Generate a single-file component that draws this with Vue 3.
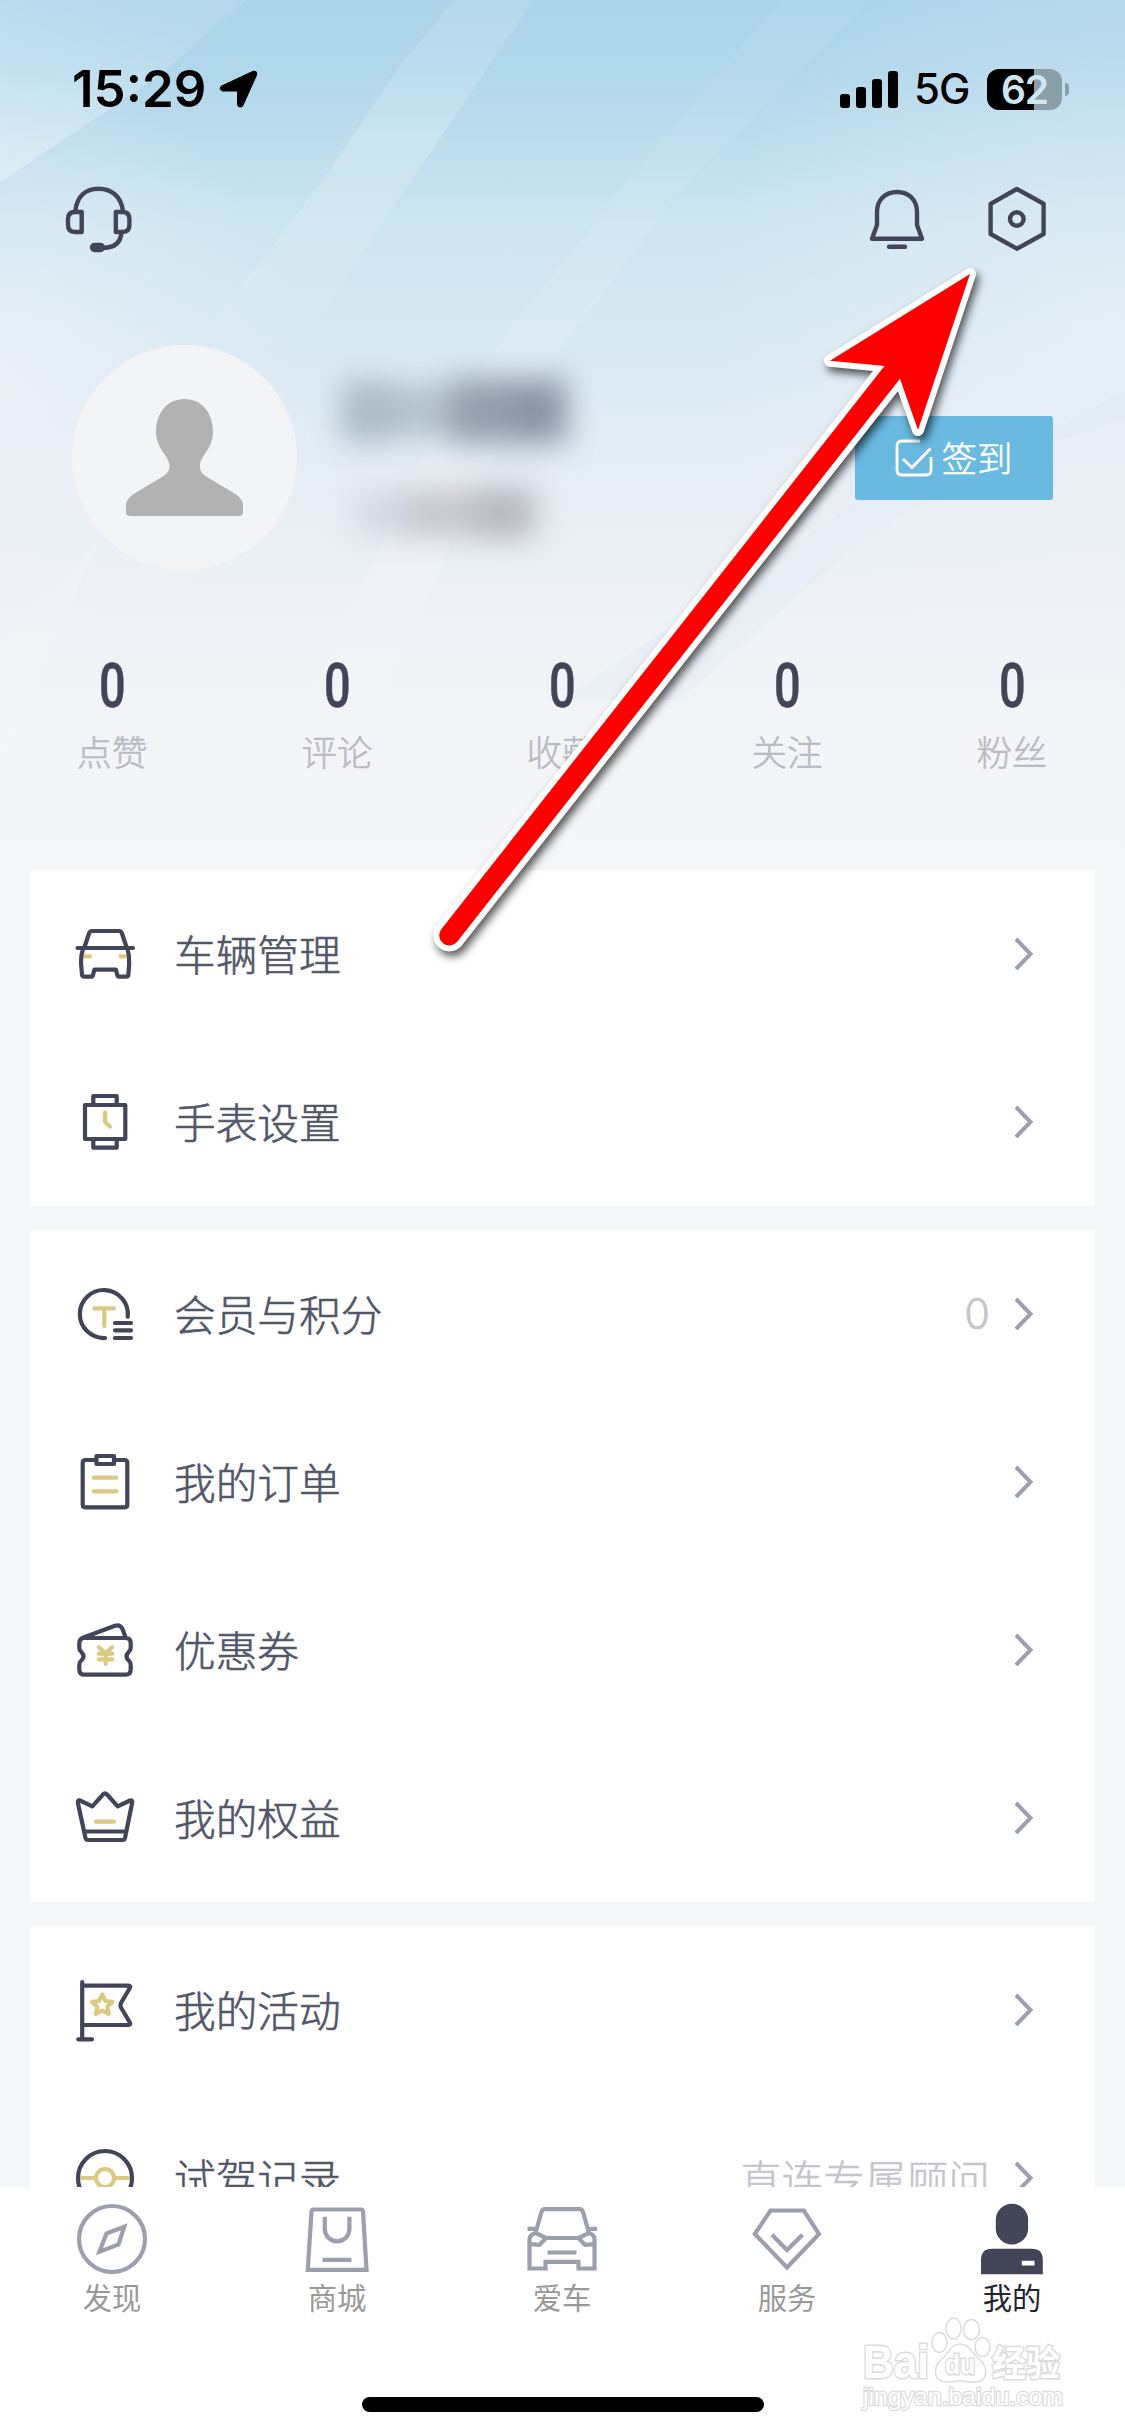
<script setup>
const stats = ['点赞', '评论', '收藏', '关注', '粉丝']

const groups = [
  [
    { icon: 'car', label: '车辆管理' },
    { icon: 'watch', label: '手表设置' },
  ],
  [
    { icon: 'member', label: '会员与积分', extra: '0' },
    { icon: 'order', label: '我的订单' },
    { icon: 'coupon', label: '优惠券' },
    { icon: 'crown', label: '我的权益' },
  ],
  [
    { icon: 'flag', label: '我的活动' },
    { icon: 'drive', label: '试驾记录', extra: '直连专属顾问' },
  ],
]

// d: dark strokes, g: gold strokes
const icons = {
  car: {
    d: 'M5.5 27H61M12.5 26L17 12.500Q17.800 10 20 10H47Q49.200 10 50 12.500L54.500 26M11 28Q8.800 34 9 42L10 53.500Q10.200 55.700 12.500 55.700H18.500Q20.800 55.700 21.300 53L22.300 48.700H44L45 53Q45.500 55.700 47.800 55.700H54Q56.200 55.700 56.400 53.500L57.200 42Q57.300 34 55.500 28',
    g: 'M13 35.300H18M48.500 35.300H53',
  },
  watch: {
    d: 'M13 16H53.300V50H13ZM21.300 15V7H44.700V15M21.300 51V58.700H44.700V51',
    g: 'M33 23.500V33L38 37.500',
  },
  member: {
    d: 'M55.700 35.700A24 24 0 1 0 33 57M43 42H59M43 49.400H59M43 57H59',
    g: 'M22.300 27.400H42M32.300 27.400V45',
  },
  order: {
    d: 'M24 11H13.500Q10.700 11 10.700 13.800V55.500Q10.700 58.300 13.500 58.300H52.500Q55.300 58.300 55.300 55.500V13.800Q55.300 11 52.500 11H42M24.500 7H42V15H24.500Z',
    g: 'M21.800 28.700H44.200M21.800 42.300H44.200',
  },
  coupon: {
    d: 'M12.500 21H53.500Q58.700 21 58.700 26V31Q58.700 33.500 56.500 35.200Q52.500 39.300 56.500 43.400Q58.700 45 58.700 47.500V52.500Q58.700 57.700 53.500 57.700H12.500Q7.300 57.700 7.300 52.500V47.500Q7.300 45 9.500 43.400Q13.500 39.300 9.500 35.200Q7.300 33.500 7.300 31V26Q7.300 22 11.500 20.500L43 8.800Q48 7 50.500 12L53.500 20',
    g: 'M27 30.300L33.700 36.500L40 30.300M26.800 36.700H40.200M26.800 42.400H40.200M33.700 36V47',
  },
  crown: {
    d: 'M8 15.500L20.300 21.300L31 9.500Q33 7.300 35 9.500L45.700 21.300L58 15.500Q61 14.800 60 18.500L53 53Q52.500 55 50.500 55H16Q14 55 13.500 53L6 18.500Q5.200 14.800 8 15.500M12.500 46.500H53.500',
    g: 'M24 36.700H42',
  },
  flag: {
    d: 'M10.200 5V62M6.200 62.300H20M10 8.700H56.500Q59 8.700 57.800 11L49 26Q48 28.300 49 30.500L57.800 45.500Q59 48 56.500 48H10',
    g: 'M30.300 17.500L33.400 24L40.500 24.900L35.300 29.700L36.700 37L30.300 33.500L23.900 37L25.300 29.700L20 24.900L27.200 24Z',
  },
  drive: {
    d: 'M33 6A27 27 0 1 1 33 60A27 27 0 1 1 33 6Z',
    g: 'M10 33H24M42 33H56M33 24A9 9 0 1 1 33 42A9 9 0 1 1 33 24Z',
  },
}

const tabs = [
  { label: '发现', d: 'M36 3A33 33 0 1 1 36 69A33 33 0 1 1 36 3ZM48.300 23.700L42.500 41.500L23.500 48.600L30.500 30.500Z' },
  { label: '商城', d: 'M12.500 6.500H60Q61.800 6.500 62 8.500L65.500 66.800H6.800L10.500 8.500Q10.700 6.500 12.500 6.500ZM23.800 13.800V26A12.300 12.300 0 0 0 48.400 26V13.800M21.500 56.800H50.500' },
  { label: '爱车', d: 'M9.500 30L15.500 9Q16.300 6.200 19 6.200H53.500Q56.200 6.200 57 9L63 30M1.500 25.800H10.500M62 25.800H71M9.500 30L20 35H52.500L63 30Q68.500 32 68.500 36V65.500H52.500V58.800H19.500V65.500H3.500V36Q3.500 32 9.500 30M3.500 41.200L13.500 41.800L20 35M68.500 41.200L59 41.800L52.500 35M21.500 49.500H50.500' },
  { label: '服务', d: 'M19.500 7.500H52.800L68 31L36 64.500L3.800 31ZM21 31.800L36 47L51.500 31.800' },
  { label: '我的', active: true },
]
</script>

<template>
  <div class="page">
    <svg class="sky" viewBox="0 0 1125 870" preserveAspectRatio="none">
      <defs>
        <linearGradient id="sky" x1="0" y1="0" x2="0" y2="1">
          <stop offset="0" stop-color="#add4ea" />
          <stop offset=".08" stop-color="#b1d7eb" />
          <stop offset=".18" stop-color="#c0deed" />
          <stop offset=".26" stop-color="#cde5f0" />
          <stop offset=".36" stop-color="#d6e8f2" />
          <stop offset=".46" stop-color="#dfebf4" />
          <stop offset=".58" stop-color="#e8eef5" />
          <stop offset=".72" stop-color="#eff2f6" />
          <stop offset=".88" stop-color="#f4f5f8" />
          <stop offset="1" stop-color="#f5f6f8" />
        </linearGradient>
        <linearGradient id="ray" gradientUnits="userSpaceOnUse" x1="0" y1="0" x2="0" y2="370">
          <stop offset="0" stop-color="#fff" stop-opacity=".1" />
          <stop offset=".4" stop-color="#fff" stop-opacity=".2" />
          <stop offset="1" stop-color="#fff" stop-opacity="0" />
        </linearGradient>
        <linearGradient id="streak" gradientUnits="userSpaceOnUse" x1="0" y1="0" x2="0" y2="760">
          <stop offset="0" stop-color="#fff" stop-opacity=".04" />
          <stop offset=".4" stop-color="#fff" stop-opacity=".1" />
          <stop offset=".75" stop-color="#fff" stop-opacity=".14" />
          <stop offset="1" stop-color="#fff" stop-opacity="0" />
        </linearGradient>
        <linearGradient id="glow" gradientUnits="userSpaceOnUse" x1="120" y1="-20" x2="20" y2="180">
          <stop offset="0" stop-color="#fff" stop-opacity=".1" />
          <stop offset="1" stop-color="#fff" stop-opacity=".34" />
        </linearGradient>
        <radialGradient id="left" gradientUnits="userSpaceOnUse" cx="0" cy="370" r="300">
          <stop offset="0" stop-color="#f1f3f8" stop-opacity=".6" />
          <stop offset="1" stop-color="#f1f3f8" stop-opacity="0" />
        </radialGradient>
        <radialGradient id="right" gradientUnits="userSpaceOnUse" cx="1125" cy="330" r="420">
          <stop offset="0" stop-color="#f1f3f8" stop-opacity=".5" />
          <stop offset="1" stop-color="#f1f3f8" stop-opacity="0" />
        </radialGradient>
      </defs>
      <rect width="1125" height="870" fill="url(#sky)" />
      <rect width="400" height="870" fill="url(#left)" />
      <rect x="625" width="500" height="870" fill="url(#right)" />
      <path d="M0 0H246L160 75L0 182Z" fill="url(#glow)" />
      <path d="M455 0H533L500 50L310 330L290 370H180L330 170L400 65Z" fill="url(#ray)" />
      <path d="M780 0H870L690 180L520 400L350 760H280L440 420L620 190Z" fill="url(#streak)" />
      <path d="M100 540L0 760V640Z" fill="#fff" opacity=".12" />
      <path d="M1125 390L860 540L680 700H560L860 500L1125 420Z" fill="#d8e8f4" opacity=".2" />
    </svg>

    <div class="status">
      <span class="time">15:29</span>
      <svg class="locate" viewBox="0 0 40 40"><path d="M3 17.500L34 3Q38 2 37 6L23.500 36Q21 39 19 36V21.500H4Q0 20 3 17.500Z" fill="#000" stroke="#000" stroke-width="2" stroke-linejoin="round" /></svg>
      <svg class="signal" viewBox="0 0 58 37">
        <rect y="23" width="10" height="14" rx="3" />
        <rect x="16" y="16" width="10" height="21" rx="3" />
        <rect x="32" y="8" width="10" height="29" rx="3" />
        <rect x="48" width="10" height="37" rx="3" />
      </svg>
      <span class="net">5G</span>
      <div class="battery">62</div>
      <i class="nub"></i>
    </div>

    <div class="tools">
      <svg viewBox="0 0 70 70">
        <path d="M11.300 27C13 12 22 4.700 34.600 4.700S57 12 59 27M17.700 28H11Q4 28 4 35V41Q4 48 11 48H17.700ZM51.800 28H58.500Q65.400 28 65.400 35V41Q65.400 48 58.500 48H51.800ZM57.500 48Q56.500 63.500 40 63.800" />
        <rect x="28" y="61" width="11" height="5" rx="2.500" fill="#424557" />
      </svg>
      <svg class="bell" viewBox="0 0 70 70"><path d="M10 54.700L15 41V28C15 16 23 8 35 8S55 16 55 28V41L60 54.700ZM27 62.700H43" /></svg>
      <svg class="gear" viewBox="0 0 70 70"><path d="M34.800 5L61.600 19.800V50L34.800 64.700L8.600 50V19.800Z" /><circle cx="34.800" cy="35" r="6.800" /></svg>
    </div>

    <div class="profile">
      <div class="avatar">
        <svg viewBox="0 0 117 117"><path d="M58.500 0C76 0 87 14 87 33C87 50 74 57 74 67C74 72 76 75 81 78L106 93Q117 99 117 106V113Q117 117 113 117H4Q0 117 0 113V106Q0 99 11 93L36 78C41 75 43.500 72 43.500 67C43.500 57 30 50 30 33C30 14 41 0 58.500 0Z" fill="#b2b2b2" /></svg>
      </div>
      <div class="identity">
        <div class="smear name"><i></i><i></i><i></i><i></i></div>
        <div class="smear tag"><i></i><i></i><i></i></div>
      </div>
      <div class="checkin">
        <svg viewBox="0 0 38 38"><path d="M25 2H7Q2 2 2 7V31Q2 36 7 36H31Q36 36 36 31V18M8 20L17 28.500L35.500 9.500" fill="none" stroke="#fff" stroke-width="2.800" /></svg>
        <span>签到</span>
      </div>
    </div>

    <div class="stats">
      <div v-for="s in stats" :key="s" class="stat">
        <b>0</b>
        <span>{{ s }}</span>
      </div>
    </div>

    <div class="groups">
      <section v-for="(group, i) in groups" :key="i" class="card">
        <div v-for="row in group" :key="row.label" class="row">
          <svg class="row-icon" viewBox="0 0 66 66">
            <path class="gold" :d="icons[row.icon].g" />
            <path class="dark" :d="icons[row.icon].d" />
          </svg>
          <span class="row-label">{{ row.label }}</span>
          <span class="row-extra">{{ row.extra }}</span>
          <svg class="chevron" viewBox="0 0 20 34"><path d="M2 2L16.500 17L2 32" /></svg>
        </div>
      </section>
    </div>

    <nav class="tabbar">
      <div v-for="t in tabs" :key="t.label" class="tab" :class="{ active: t.active }">
        <svg viewBox="0 0 72 72">
          <path v-if="t.d" :d="t.d" />
          <template v-else>
            <rect x="19.800" y=".8" width="32.300" height="40.700" rx="16" fill="#424557" />
            <path class="solid" d="M5 71.200V57Q5 45.800 16 45.800H56Q66.800 45.800 66.800 57V71.200ZM45.800 57.800V62.500H58.500V57.800Z" />
          </template>
        </svg>
        <span>{{ t.label }}</span>
      </div>
    </nav>
    <i class="home-bar"></i>

    <svg class="watermark" viewBox="0 0 210 110">
      <text class="brand" x="2" y="70" textLength="66" lengthAdjust="spacingAndGlyphs">Bai</text>
      <g class="paw">
        <ellipse cx="78.500" cy="34.500" rx="7.500" ry="10" />
        <ellipse cx="92.500" cy="20.500" rx="7.500" ry="10.500" />
        <ellipse cx="110.500" cy="21.500" rx="8" ry="10" />
        <ellipse cx="121.500" cy="39" rx="7.500" ry="9.500" />
        <path d="M99 36C108 36 111 45 118 51C127 58 128 74 114 74C107 74 105 73 99 73S91 74 86 74C71 74 72 58 81 51C88 45 90 36 99 36Z" />
      </g>
      <text class="du" x="84" y="66" textLength="30" lengthAdjust="spacingAndGlyphs">du</text>
      <text class="cn" x="131" y="68" textLength="68" lengthAdjust="spacingAndGlyphs">经验</text>
      <text class="site" x="2" y="97" textLength="200" lengthAdjust="spacingAndGlyphs">jingyan.baidu.com</text>
    </svg>

    <svg class="pointer" viewBox="0 0 1125 1000">
      <path d="M970 274L830 360.700L884.500 366L441.500 929A10 10 0 0 0 457.200 941.700L900 378.700L918 430Z" />
    </svg>
  </div>
</template>

<style>
body {
  background: #f5f6f8;
}
</style>

<style scoped>
.page {
  position: relative;
  display: flex;
  flex-direction: column;
  width: 1125px;
  height: 2436px;
  overflow: hidden;
  background: #f5f6f8;
  font-family: Inter, "Noto Sans CJK SC", sans-serif;
}
.page > * {
  flex-shrink: 0;
}
.sky {
  position: absolute;
  left: 0;
  top: 0;
  width: 1125px;
  height: 870px;
}
.status {
  position: relative;
  display: flex;
  align-items: center;
  box-sizing: border-box;
  height: 178px;
  padding: 0 56px 0 72px;
  color: #000;
}
.time {
  width: 147px;
  font-size: 51px;
  font-weight: 600;
  line-height: 60px;
}
.locate {
  width: 40px;
  height: 40px;
}
.signal {
  width: 58px;
  height: 37px;
  margin-left: auto;
}
.net {
  width: 73px;
  margin-left: 16px;
  font-size: 42px;
  font-weight: 500;
  line-height: 50px;
  letter-spacing: -1px;
}
.battery {
  width: 75px;
  height: 41px;
  border-radius: 12px;
  background: linear-gradient(90deg, #000 47px, #8a9fa9 47px);
  color: #cfe6f1;
  font-size: 39px;
  font-weight: 600;
  line-height: 41px;
  text-align: center;
  letter-spacing: -1px;
}
.nub {
  width: 4px;
  height: 13px;
  margin-left: 3px;
  border-radius: 0 5px 5px 0;
  background: #8a9fa9;
}
.tools {
  position: relative;
  display: flex;
  box-sizing: border-box;
  height: 167px;
  padding: 6px 73px 0 64px;
}
.tools svg {
  width: 70px;
  height: 70px;
  fill: none;
  stroke: #424557;
  stroke-width: 4.400;
  stroke-linejoin: round;
  stroke-linecap: round;
}
.bell {
  margin-left: auto;
}
.gear {
  margin-left: 50px;
}
.profile {
  position: relative;
  display: flex;
  align-items: center;
  height: 225px;
  padding: 0 72px;
}
.avatar {
  display: flex;
  align-items: center;
  justify-content: center;
  width: 225px;
  height: 225px;
  border-radius: 50%;
  background: #f3f4f6;
}
.avatar svg {
  width: 117px;
  height: 117px;
}
.identity {
  display: flex;
  flex-direction: column;
  gap: 44px;
  margin-left: 44px;
}
.smear {
  display: flex;
  align-items: center;
  filter: blur(15px);
}
.name i {
  width: 50px;
  height: 62px;
  background: #acbac6;
}
.name i + i {
  width: 60px;
  height: 54px;
  background: #b5c1cb;
}
.name i + i + i {
  width: 60px;
  height: 66px;
  background: #949eac;
}
.name i + i + i + i {
  width: 56px;
  height: 64px;
  background: #8b93a3;
}
.tag i {
  width: 50px;
  height: 42px;
  margin-left: 14px;
  background: #d2d6e2;
}
.tag i + i {
  width: 70px;
  height: 46px;
  margin-left: 0;
  background: #c5c6ca;
}
.tag i + i + i {
  width: 60px;
  height: 50px;
  background: #b7b7c0;
}
.checkin {
  display: flex;
  align-items: center;
  justify-content: center;
  gap: 8px;
  width: 198px;
  height: 84px;
  margin-left: auto;
  border-radius: 3px;
  background: #69b9e1;
  color: #fff;
  font-size: 35.500px;
  font-weight: 300;
  -webkit-text-stroke: 0.500px currentColor;
}
.checkin span {
  margin-bottom: 3px;
}
.checkin svg {
  width: 38px;
  height: 38px;
}
.stats {
  position: relative;
  display: flex;
  height: 300px;
}
.stat {
  display: flex;
  flex-direction: column;
  align-items: center;
  box-sizing: border-box;
  width: 225px;
  padding: 80px 1px 0 0;
}
.stat b {
  height: 72px;
  color: #424557;
  font-family: Roboto, sans-serif;
  font-size: 61px;
  font-weight: 500;
  line-height: 72px;
  transform: scaleX(0.770);
  -webkit-text-stroke: 0.500px currentColor;
}
.stat span {
  margin-top: 5px;
  color: #b9bbc4;
  font-size: 35.500px;
  font-weight: 300;
  line-height: 54px;
  -webkit-text-stroke: 0.500px currentColor;
}
.groups {
  position: relative;
  display: flex;
  flex-direction: column;
  gap: 24px;
  height: 1317px;
  padding: 0 30px;
  overflow: hidden;
}
.card {
  flex-shrink: 0;
  background: #fff;
}
.row {
  display: flex;
  align-items: center;
  height: 168px;
  padding: 0 61px 0 42px;
}
.row-icon {
  width: 66px;
  height: 66px;
  margin-right: 36px;
  fill: none;
  stroke-width: 4.200;
  stroke-linejoin: round;
  stroke-linecap: round;
}
.dark {
  stroke: #424557;
}
.gold {
  stroke: #dcca82;
}
.row-label {
  flex: 1;
  margin-bottom: 3px;
  color: #515669;
  font-size: 41.700px;
  font-weight: 300;
  -webkit-text-stroke: 0.600px currentColor;
}
.row-extra {
  margin-right: 24px;
  color: #c4c5cd;
  font-size: 41.700px;
  font-weight: 300;
  -webkit-text-stroke: 0.500px currentColor;
}
.chevron {
  width: 20px;
  height: 34px;
  fill: none;
  stroke: #9c9fae;
  stroke-width: 4;
}
.tabbar {
  position: relative;
  display: flex;
  height: 249px;
  background: #fff;
}
.tab {
  display: flex;
  flex-direction: column;
  align-items: center;
  box-sizing: border-box;
  width: 225px;
  padding: 16px 1px 0 0;
  color: #999;
  font-size: 29.300px;
  line-height: 44px;
}
.tab svg {
  width: 72px;
  height: 72px;
  margin-bottom: 1.500px;
  overflow: visible;
  fill: none;
  stroke: #9c9fae;
  stroke-width: 4.200;
}
.tab.active {
  color: #20242e;
}
.tab.active svg {
  stroke: none;
}
.solid {
  fill: #424557;
  fill-rule: evenodd;
}
.home-bar {
  position: absolute;
  left: 362px;
  top: 2397px;
  width: 402px;
  height: 15px;
  border-radius: 8px;
  background: #000;
}
.watermark {
  position: absolute;
  left: 861px;
  top: 2308px;
  width: 210px;
  height: 110px;
  fill: #fff;
  stroke: #dcdcdc;
  stroke-width: 1.500;
}
.watermark text {
  paint-order: stroke;
  stroke-width: 3;
  font-family: "Liberation Sans", "Noto Sans CJK SC", sans-serif;
}
.watermark .brand {
  font-size: 47px;
  font-weight: 700;
}
.watermark .du {
  font-size: 28px;
  font-weight: 700;
}
.watermark .cn {
  font-size: 35px;
  font-weight: 700;
}
.watermark .site {
  font-size: 24px;
  stroke-width: 2.500;
}
.pointer {
  position: absolute;
  left: 0;
  top: 0;
  width: 1125px;
  height: 1000px;
  fill: #f00;
  stroke: #fff;
  stroke-width: 12;
  stroke-linejoin: round;
  paint-order: stroke;
  filter: drop-shadow(3px 5px 4px rgba(0, 0, 0, 0.650));
}
</style>
